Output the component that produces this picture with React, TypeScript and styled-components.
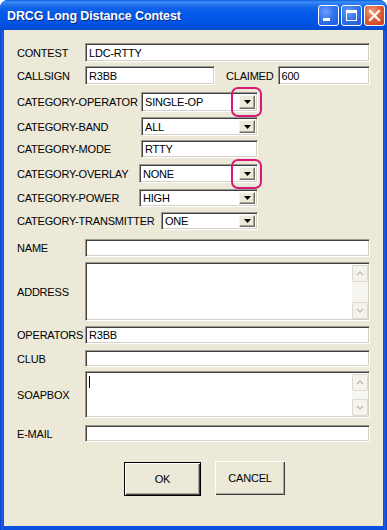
import React from "react";
import styled, { createGlobalStyle } from "styled-components";

const Global = createGlobalStyle`
  html, body { margin: 0; padding: 0; background: #ffffff; }
  body { font-family: "Liberation Sans", Arial, sans-serif; }
  * { box-sizing: border-box; }
`;

const Window = styled.div`
  width: 387px;
  height: 530px;
  display: flex;
  flex-direction: column;
  background: linear-gradient(to right, #0840C8 0px, #1C5EE6 2px, #0A4FE0 4px, #0A4FE0 383px, #1C5EE6 385px, #0840C8 387px);
  border-radius: 8px 8px 0 0;
  overflow: hidden;
`;

const TitleBar = styled.div`
  height: 30px;
  flex: none;
  display: flex;
  align-items: center;
  padding: 0 2px 0 7px;
  background: linear-gradient(to bottom, #0A5DD8 0px, #3C8DF8 2px, #2A7AF0 4px, #0F62E8 8px, #0459EA 14px, #0355E6 22px, #0350DC 27px, #0249C8 30px);
`;

const Title = styled.div`
  flex: 1;
  color: #ffffff;
  font-family: "Liberation Sans", Arial, sans-serif;
  font-weight: bold;
  font-size: 12.5px;
  letter-spacing: -0.1px;
  text-shadow: 1px 1px 0 #0A2A8A;
  padding-top: 1px;
`;

const Controls = styled.div`
  display: flex;
  gap: 2px;
  padding-top: 1px;
`;

const CtlButton = styled.div<{ $close?: boolean }>`
  width: 21px;
  height: 21px;
  border: 1px solid #ffffff;
  border-radius: 3px;
  display: flex;
  align-items: center;
  justify-content: center;
  background: ${(p) =>
    p.$close
      ? "radial-gradient(circle at 35% 30%, #F0A080 0%, #E0603A 45%, #C83A14 100%)"
      : "radial-gradient(circle at 35% 30%, #6FA0FA 0%, #3474EE 45%, #1D55D8 100%)"};
`;

const Client = styled.div`
  flex: 1;
  margin: 0 4px 4px 4px;
  background: #ECE9D8;
  display: flex;
  flex-direction: column;
  padding: 13px 13px 0 13px;
`;

const Row = styled.div<{ $gap: number; $h: number }>`
  display: flex;
  align-items: center;
  margin-top: ${(p) => p.$gap}px;
  height: ${(p) => p.$h}px;
`;

const Label = styled.div<{ $w?: number }>`
  width: ${(p) => (p.$w ? `${p.$w}px` : "auto")};
  flex: none;
  font-size: 11px;
  letter-spacing: -0.2px;
  color: #000000;
  white-space: nowrap;
`;

const sunken = `
  background: #ffffff;
  border-top: 1px solid #9C9A90;
  border-left: 1px solid #9C9A90;
  border-right: 1px solid #ffffff;
  border-bottom: 1px solid #ffffff;
  box-shadow: inset 1px 1px 0 #404040, inset -1px -1px 0 #D4D0C8;
`;

const TextBox = styled.div<{ $w?: number }>`
  ${sunken}
  height: 100%;
  width: ${(p) => (p.$w ? `${p.$w}px` : "auto")};
  flex: ${(p) => (p.$w ? "none" : "1")};
  display: flex;
  align-items: center;
  padding-left: 3px;
  font-size: 11px;
  letter-spacing: -0.2px;
  color: #000000;
`;

const Select = styled.div<{ $w: number }>`
  ${sunken}
  position: relative;
  height: 100%;
  width: ${(p) => p.$w}px;
  flex: none;
  display: flex;
  align-items: center;
  padding: 2px 2px 2px 3px;
  font-size: 11px;
  letter-spacing: -0.2px;
  color: #000000;
`;

const SelectText = styled.div`
  flex: 1;
`;

const DropButton = styled.div`
  width: 16px;
  height: 100%;
  max-height: 17px;
  background: #ECE9D8;
  border-top: 1px solid #F8F7F2;
  border-left: 1px solid #F8F7F2;
  border-right: 1px solid #6E6C62;
  border-bottom: 1px solid #6E6C62;
  box-shadow: inset -1px -1px 0 #ACA899;
  display: flex;
  align-items: center;
  justify-content: center;
`;

const Highlight = styled.div`
  position: absolute;
  right: -5px;
  top: -6px;
  width: 31px;
  height: 30px;
  border: 2px solid #D8197A;
  border-radius: 7px;
  pointer-events: none;
`;

const TextArea = styled.div`
  ${sunken}
  flex: 1;
  height: 100%;
  display: flex;
  padding: 2px 1px 1px 3px;
`;

const AreaBody = styled.div`
  flex: 1;
  position: relative;
`;

const Caret = styled.div`
  width: 1px;
  height: 12px;
  margin-top: 2px;
  background: #000000;
`;

const ScrollBar = styled.div`
  width: 16px;
  display: flex;
  flex-direction: column;
  justify-content: space-between;
  background: #F6F5F0;
`;

const ScrollArrow = styled.div`
  width: 16px;
  height: 17px;
  border: 1px solid #DCDACE;
  border-radius: 2px;
  background: #F4F3EC;
  display: flex;
  align-items: center;
  justify-content: center;
`;

const ButtonRow = styled.div`
  display: flex;
  justify-content: flex-start;
  align-items: flex-start;
  padding-left: 107px;
  margin-top: 19px;
  gap: 14px;
`;

const PushButton = styled.div<{ $w: number; $h: number; $default?: boolean; $dy: number }>`
  width: ${(p) => p.$w}px;
  height: ${(p) => p.$h}px;
  margin-top: ${(p) => p.$dy}px;
  display: flex;
  align-items: center;
  justify-content: center;
  font-size: 11px;
  letter-spacing: -0.2px;
  color: #000000;
  background: #ECE9D8;
  border: ${(p) => (p.$default ? "1px solid #000000" : "none")};
  box-shadow: ${(p) =>
    p.$default
      ? "inset 1px 1px 0 #ffffff, inset -1px -1px 0 #404040, inset -2px -2px 0 #ACA899"
      : "inset 1px 1px 0 #ffffff, inset -1px -1px 0 #404040, inset -2px -2px 0 #ACA899"};
`;

const Tri = () => (
  <svg width="7" height="4" viewBox="0 0 7 4">
    <path d="M0 0h7L3.5 4z" fill="#000" />
  </svg>
);

const Chevron = ({ up }: { up?: boolean }) => (
  <svg width="8" height="5" viewBox="0 0 8 5">
    <path
      d={up ? "M1 4L4 1l3 3" : "M1 1l3 3 3-3"}
      fill="none"
      stroke="#C0BDB0"
      strokeWidth="1.4"
    />
  </svg>
);

const Field = ({ text }: { text?: string }) => <TextBox>{text}</TextBox>;

const Combo = ({ w, text, mark }: { w: number; text: string; mark?: boolean }) => (
  <Select $w={w}>
    <SelectText>{text}</SelectText>
    <DropButton>
      <Tri />
    </DropButton>
    {mark && <Highlight />}
  </Select>
);

const Memo = ({ caret }: { caret?: boolean }) => (
  <TextArea>
    <AreaBody>{caret && <Caret />}</AreaBody>
    <ScrollBar>
      <ScrollArrow>
        <Chevron up />
      </ScrollArrow>
      <ScrollArrow>
        <Chevron />
      </ScrollArrow>
    </ScrollBar>
  </TextArea>
);

export default function App() {
  return (
    <>
      <Global />
      <Window>
        <TitleBar>
          <Title>DRCG Long Distance Contest</Title>
          <Controls>
            <CtlButton>
              <svg width="19" height="19" viewBox="0 0 19 19">
                <rect x="4" y="12" width="7" height="3" fill="#fff" />
              </svg>
            </CtlButton>
            <CtlButton>
              <svg width="19" height="19" viewBox="0 0 19 19">
                <rect x="4.5" y="4.5" width="10" height="10" fill="none" stroke="#fff" strokeWidth="1" />
                <rect x="4" y="4" width="11" height="3" fill="#fff" />
              </svg>
            </CtlButton>
            <CtlButton $close>
              <svg width="19" height="19" viewBox="0 0 19 19">
                <path d="M5 5l9 9M14 5l-9 9" stroke="#fff" strokeWidth="2.2" strokeLinecap="square" />
              </svg>
            </CtlButton>
          </Controls>
        </TitleBar>
        <Client>
          <Row $gap={0} $h={19}>
            <Label $w={68}>CONTEST</Label>
            <Field text="LDC-RTTY" />
          </Row>
          <Row $gap={4} $h={19}>
            <Label $w={68}>CALLSIGN</Label>
            <TextBox $w={130}>R3BB</TextBox>
            <Label style={{ marginLeft: 11, marginRight: 4 }}>CLAIMED</Label>
            <Field text="600" />
          </Row>
          <Row $gap={7} $h={20}>
            <Label $w={124}>CATEGORY-OPERATOR</Label>
            <Combo w={117} text="SINGLE-OP" mark />
          </Row>
          <Row $gap={5} $h={19}>
            <Label $w={124}>CATEGORY-BAND</Label>
            <Combo w={117} text="ALL" />
          </Row>
          <Row $gap={4} $h={18}>
            <Label $w={124}>CATEGORY-MODE</Label>
            <TextBox $w={117}>RTTY</TextBox>
          </Row>
          <Row $gap={6} $h={19}>
            <Label $w={122}>CATEGORY-OVERLAY</Label>
            <Combo w={119} text="NONE" mark />
          </Row>
          <Row $gap={6} $h={18}>
            <Label $w={122}>CATEGORY-POWER</Label>
            <Combo w={119} text="HIGH" />
          </Row>
          <Row $gap={5} $h={18}>
            <Label $w={144}>CATEGORY-TRANSMITTER</Label>
            <Combo w={97} text="ONE" />
          </Row>
          <Row $gap={9} $h={18}>
            <Label $w={68}>NAME</Label>
            <Field />
          </Row>
          <Row $gap={5} $h={59}>
            <Label $w={68}>ADDRESS</Label>
            <Memo />
          </Row>
          <Row $gap={5} $h={18}>
            <Label $w={68}>OPERATORS</Label>
            <Field text="R3BB" />
          </Row>
          <Row $gap={6} $h={17}>
            <Label $w={68}>CLUB</Label>
            <Field />
          </Row>
          <Row $gap={4} $h={47}>
            <Label $w={68}>SOAPBOX</Label>
            <Memo caret />
          </Row>
          <Row $gap={7} $h={17}>
            <Label $w={68}>E-MAIL</Label>
            <Field />
          </Row>
          <ButtonRow>
            <PushButton $w={77} $h={34} $dy={1} $default>
              OK
            </PushButton>
            <PushButton $w={70} $h={34} $dy={0}>
              CANCEL
            </PushButton>
          </ButtonRow>
        </Client>
      </Window>
    </>
  );
}
